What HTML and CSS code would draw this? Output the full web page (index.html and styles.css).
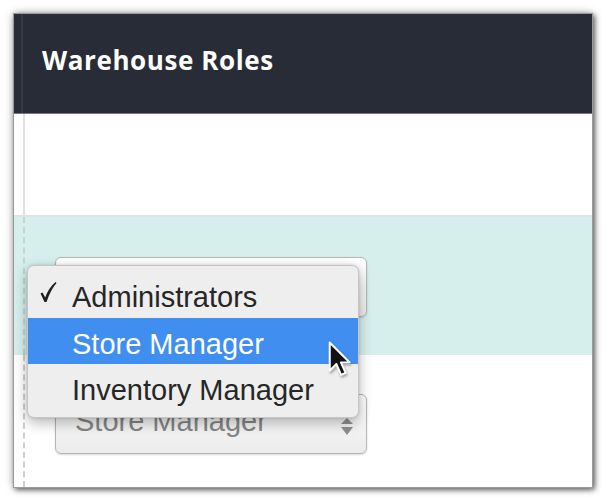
FILE: index.html
```html
<!DOCTYPE html>
<html>
<head>
<meta charset="utf-8">
<link rel="stylesheet" href="styles.css">
</head>
<body>
<div class="frame">
  <div class="header">
    <div class="hgutter"></div>
    <h1 class="title">Warehouse Roles</h1>
  </div>
  <div class="row row-blank">
    <div class="gutter"></div>
    <div class="cell solid"></div>
  </div>
  <div class="row row-teal">
    <div class="gutter"></div>
    <div class="cell dashed">
      <div class="select"><span class="sel-text"></span><span class="arrows"><i class="up"></i><i class="down"></i></span></div>
    </div>
  </div>
  <div class="row row-last">
    <div class="gutter"></div>
    <div class="cell dashed">
      <div class="select"><span class="sel-text">Store Manager</span><span class="arrows"><i class="up"></i><i class="down"></i></span></div>
    </div>
  </div>

  <ul class="menu">
    <li class="item">
      <svg class="check" width="18" height="22" viewBox="0 0 18 22">
        <path d="M1.5 12.5 L3.5 11.5 L6.2 16.5 Q9.5 7 16.5 1 L17.5 2 Q11.5 9 7.5 21 L5.5 21 Z" fill="#1e1e1e"/>
      </svg>Administrators</li>
    <li class="item active">Store Manager</li>
    <li class="item">Inventory Manager</li>
  </ul>

  <svg class="cursor" width="25" height="39" viewBox="0 0 24 38">
    <path d="M1.5 1.5 L1.5 29 L8 22.5 L12.5 33 L17 31 L12.5 21 L21 21 Z" fill="#111" stroke="#fff" stroke-width="2" stroke-linejoin="round"/>
  </svg>
</div>
</body>
</html>
```

FILE: styles.css
```css
html, body {
  margin: 0;
  padding: 0;
  background: #ffffff;
}

body {
  width: 608px;
  height: 501px;
  overflow: hidden;
  font-family: "Liberation Sans", Arial, sans-serif;
}

.frame {
  position: relative;
  margin: 14px 0 0 14px;
  width: 578px;
  height: 473px;
  display: flex;
  flex-direction: column;
  background: #fff;
  box-shadow: 0 0 0 1px #9a9a9a, 2px 2px 5px 1px rgba(0, 0, 0, 0.5), 0 0 9px rgba(0, 0, 0, 0.4);
}

.header {
  height: 99px;
  flex: none;
  background: #282c37;
  border-bottom: 1px solid #72767f;
  display: flex;
  align-items: center;
}

.hgutter {
  width: 7px;
  height: 100%;
  border-right: 2px solid #363a45;
  flex: none;
}

.title {
  margin: 0 0 0 19px;
  padding-bottom: 7px;
  font-family: "Open Sans", sans-serif;
  font-weight: 700;
  font-size: 26px;
  letter-spacing: 0.6px;
  color: #ffffff;
}

.row {
  display: flex;
  flex: none;
}

.gutter {
  width: 9px;
  flex: none;
}

.cell {
  flex: 1;
  border-left: 2px solid #e0e0e0;
}

.cell.dashed {
  border-left: 2px dashed #cfcfcf;
}

.row-blank {
  height: 101px;
  border-bottom: 2px solid #e2e2e2;
  background: #fff;
}

.row-teal {
  height: 138px;
  background: #d6efec;
}

.row-teal .cell {
  padding-top: 40px;
  padding-left: 30px;
  border-left-color: #bfd6d3;
}

.row-last {
  flex: 1;
  background: #fff;
}

.row-last .cell {
  padding-top: 39px;
  padding-left: 30px;
}

.select {
  width: 312px;
  height: 60px;
  box-sizing: border-box;
  border: 1px solid #b5b5b5;
  border-radius: 6px;
  background: linear-gradient(#ffffff, #f3f3f3 60%, #ebebeb);
  box-shadow: 0 1px 2px rgba(0, 0, 0, 0.15);
  display: flex;
  align-items: center;
  padding-left: 19px;
  padding-right: 13px;
}

.sel-text {
  flex: 1;
  font-size: 29px;
  color: #858585;
  line-height: 1;
  padding-bottom: 6px;
}

.arrows {
  display: flex;
  flex-direction: column;
  gap: 3px;
  padding-top: 4px;
}

.arrows i {
  display: block;
  width: 0;
  height: 0;
  border-left: 6px solid transparent;
  border-right: 6px solid transparent;
}

.arrows .up {
  border-bottom: 6px solid #8e8e8e;
}

.arrows .down {
  border-top: 8px solid #8e8e8e;
}

.menu {
  position: absolute;
  left: 13px;
  top: 251px;
  width: 332px;
  height: 153px;
  box-sizing: border-box;
  margin: 0;
  padding: 5px 0 0;
  list-style: none;
  background: #eeeeee;
  border: 1px solid #c6c6c6;
  border-radius: 7px;
  box-shadow: 0 5px 14px rgba(0, 0, 0, 0.28), 0 0 3px rgba(0, 0, 0, 0.15);
}

.item {
  position: relative;
  height: 46px;
  box-sizing: border-box;
  padding-left: 44px;
  padding-top: 12px;
  font-size: 29px;
  line-height: 1;
  color: #262626;
}

.item:first-child {
  height: 47px;
}

.item.active {
  background: #3f8ef0;
  color: #ffffff;
}

.check {
  position: absolute;
  left: 11px;
  top: 10px;
}

.cursor {
  position: absolute;
  left: 314px;
  top: 327px;
  filter: drop-shadow(1px 2px 1px rgba(0, 0, 0, 0.3));
}
```
